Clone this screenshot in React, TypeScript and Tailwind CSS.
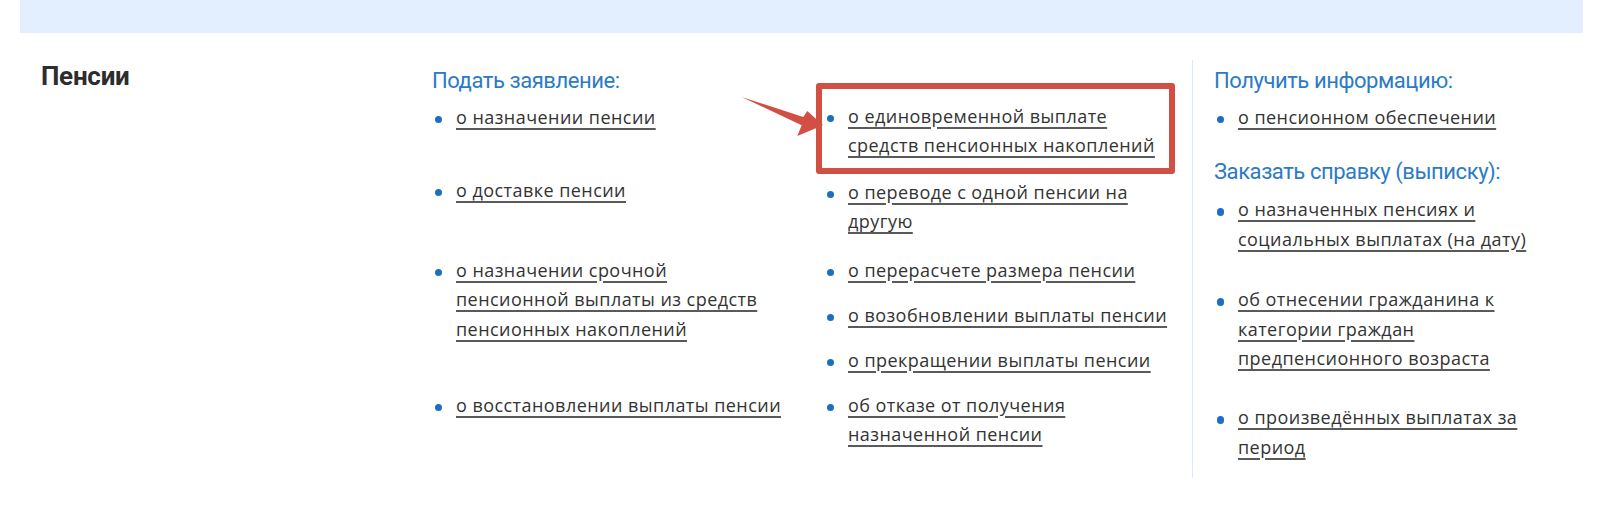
type Item = {
  lines: string[];
  className: string;
};

const leftItems: Item[] = [
  { lines: ['о назначении пенсии'], className: 'mt-[9px]' },
  { lines: ['о доставке пенсии'], className: 'mt-[43.5px]' },
  {
    lines: ['о назначении срочной', 'пенсионной выплаты из средств', 'пенсионных накоплений'],
    className: 'mt-[50.5px]',
  },
  { lines: ['о восстановлении выплаты пенсии'], className: 'mt-[46.5px]' },
];

const middleItems: Item[] = [
  { lines: ['о переводе с одной пенсии на', 'другую'], className: 'mt-[17px]' },
  { lines: ['о перерасчете размера пенсии'], className: 'mt-[19px]' },
  { lines: ['о возобновлении выплаты пенсии'], className: 'mt-[15.5px]' },
  { lines: ['о прекращении выплаты пенсии'], className: 'mt-[15.5px]' },
  { lines: ['об отказе от получения', 'назначенной пенсии'], className: 'mt-[15.5px]' },
];

const certificateItems: Item[] = [
  { lines: ['о назначенных пенсиях и', 'социальных выплатах (на дату)'], className: 'mt-[10px]' },
  {
    lines: ['об отнесении гражданина к', 'категории граждан', 'предпенсионного возраста'],
    className: 'mt-[31px]',
  },
  { lines: ['о произведённых выплатах за', 'период'], className: 'mt-[29.5px]' },
];

const linkClass =
  'text-[18px] leading-[29.5px] tracking-[0.025em] text-[#333] underline decoration-[#5a5a5a] decoration-[1.5px] underline-offset-[4px]';

function Bullet() {
  return <span className="mt-[13px] ml-[2.5px] mr-[14px] h-[7.5px] w-[7.5px] shrink-0 rounded-full bg-[#1b6fc2]" />;
}

function LinkItem({ lines, className }: Item) {
  return (
    <li className={`flex ${className}`}>
      <Bullet />
      <a href="#" className={linkClass}>
        {lines.map((line, i) => (
          <span key={line} className="whitespace-nowrap">
            {line}
            {i < lines.length - 1 && <br />}
          </span>
        ))}
      </a>
    </li>
  );
}

function GroupTitle({ children, className = '' }: { children: string; className?: string }) {
  return (
    <div
      className={`font-['Roboto',sans-serif] text-[22px] leading-[26px] tracking-[-0.02em] text-[#2b7bc4] ${className}`}
    >
      {children}
    </div>
  );
}

function Arrow() {
  return (
    <svg
      className="absolute left-[-90px] top-[-10px] h-[50px] w-[100px]"
      viewBox="0 0 100 50"
      aria-hidden="true"
    >
      <polygon points="7.7,5 69.3,25 73.3,19 89,33.3 63.3,44 67.7,33.3" fill="#d14f43" />
    </svg>
  );
}

export default function App() {
  return (
    <div className="relative h-[514px] w-[1600px] overflow-hidden bg-white font-['Open_Sans',sans-serif]">
      <div className="ml-[20px] h-[33px] w-[1563px] bg-[#e3efff]" />

      <div className="flex pt-[28px]">
        <div className="w-[432px] pl-[41px]">
          <h2 className="font-['Roboto',sans-serif] text-[26px] font-bold leading-[30px] tracking-[-0.01em] text-[#2d2d2d]">
            Пенсии
          </h2>
        </div>

        <div className="w-[392px] pt-[6.5px]">
          <GroupTitle>Подать заявление:</GroupTitle>
          <ul>
            {leftItems.map((item) => (
              <LinkItem key={item.lines[0]} {...item} />
            ))}
          </ul>
        </div>

        <div className="w-[368px] pt-[40.5px]">
          <ul>
            <li className="relative flex">
              <Bullet />
              <a href="#" className={linkClass}>
                <span className="whitespace-nowrap">о единовременной выплате</span>
                <br />
                <span className="whitespace-nowrap">средств пенсионных накоплений</span>
              </a>
              <Arrow />
              <span className="pointer-events-none absolute left-[-8px] top-[-19px] h-[91px] w-[359px] rounded-[3px] border-[6px] border-[#d14f43]" />
            </li>
            {middleItems.map((item) => (
              <LinkItem key={item.lines[0]} {...item} />
            ))}
          </ul>
        </div>

        <div className="-mt-[1px] h-[418px] border-l border-[#dbe9f8] pl-[21px] pt-[7.5px]">
          <GroupTitle>Получить информацию:</GroupTitle>
          <ul>
            <LinkItem lines={['о пенсионном обеспечении']} className="mt-[9px]" />
          </ul>
          <GroupTitle className="mt-[27px]">Заказать справку (выписку):</GroupTitle>
          <ul>
            {certificateItems.map((item) => (
              <LinkItem key={item.lines[0]} {...item} />
            ))}
          </ul>
        </div>
      </div>
    </div>
  );
}
